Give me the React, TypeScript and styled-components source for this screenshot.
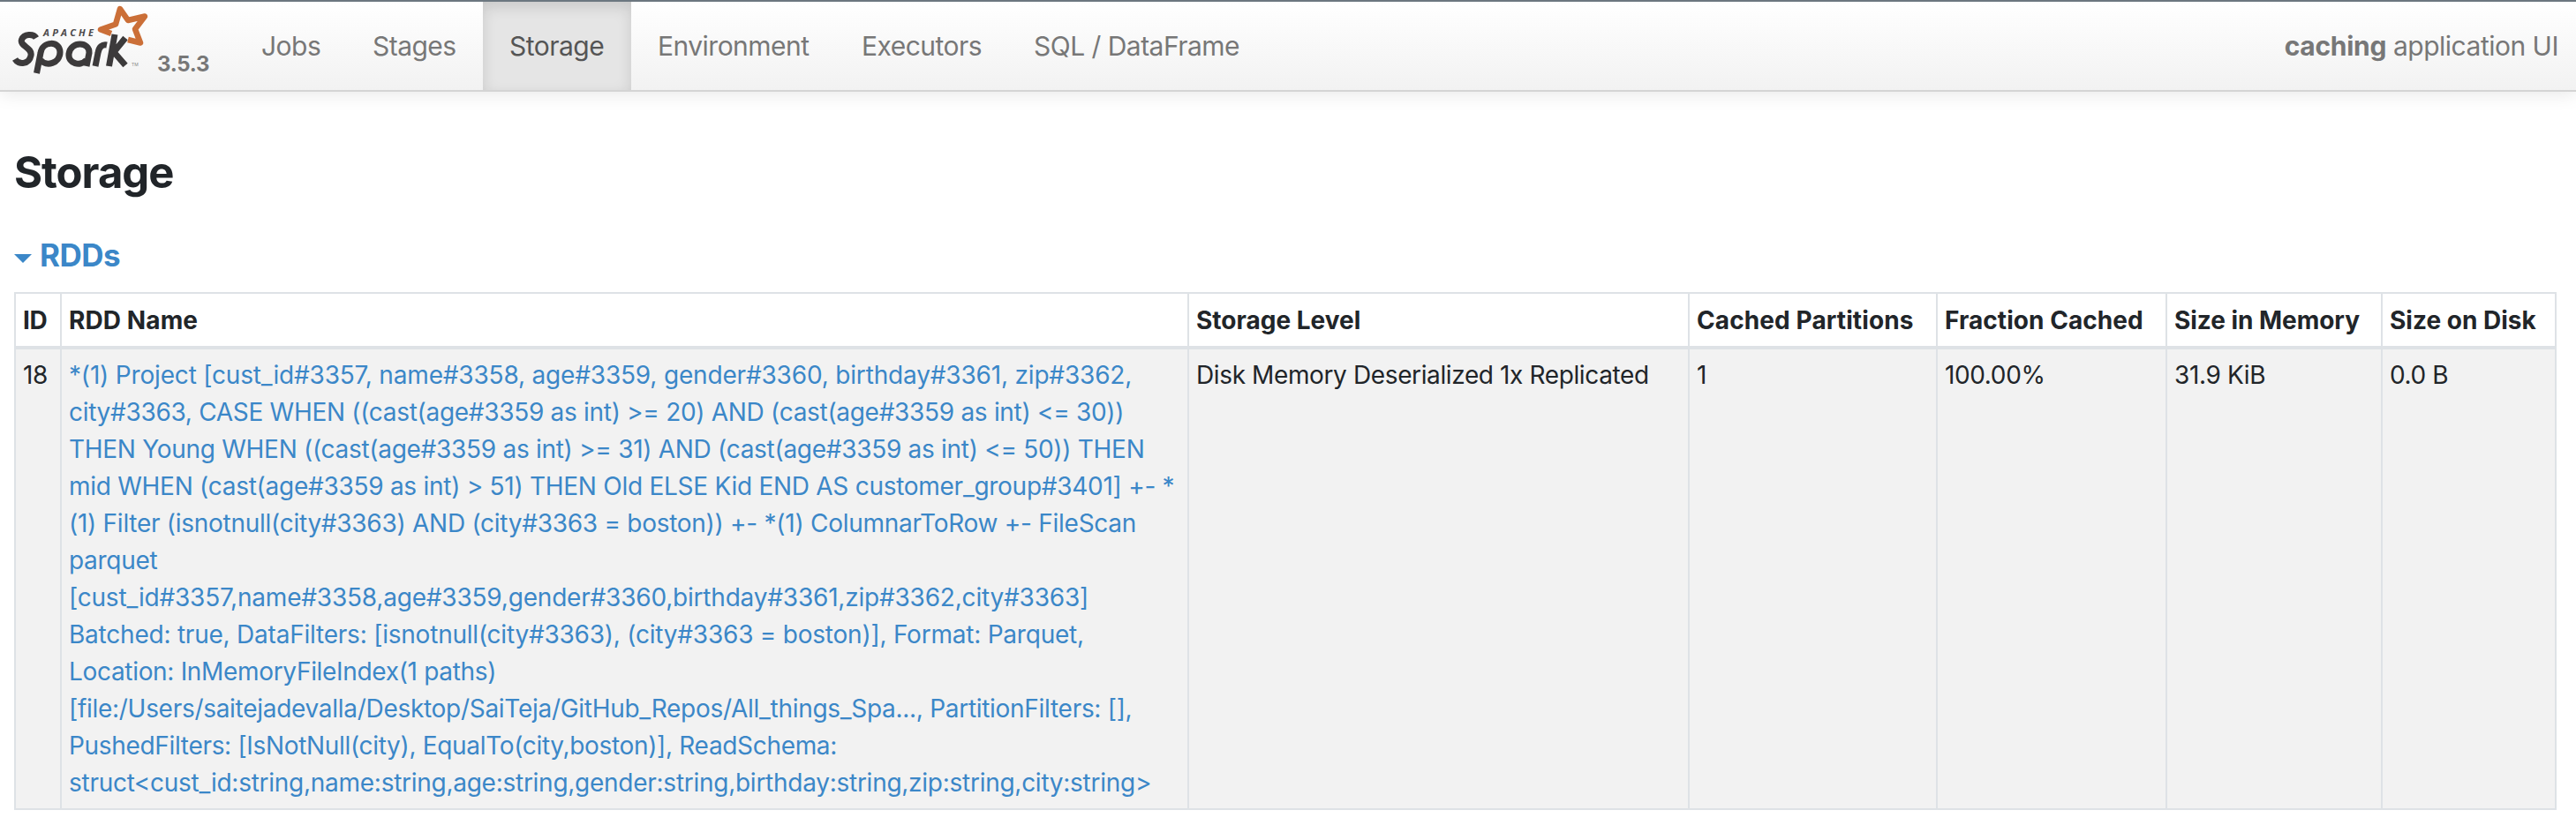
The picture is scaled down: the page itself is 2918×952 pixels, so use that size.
import React from "react";
import styled, { createGlobalStyle } from "styled-components";

const GlobalStyle = createGlobalStyle`
  * { box-sizing: border-box; }
  body { margin: 0; background: #fff; color: #212529; font: 400 28px/42px Inter, sans-serif; }
`;

const Navbar = styled.header`
  display: flex;
  height: 104px;
  border-top: 2px solid #6c7780;
  border-bottom: 2px solid #d4d4d4;
  background: linear-gradient(#fff, #f2f2f2);
  box-shadow: 0 2px 20px rgba(0, 0, 0, 0.1);
  color: #777;
`;

const Brand = styled.div`
  display: flex;
  width: 266px;
  padding-left: 14px;
`;

const Logo = styled.svg`
  display: block;
  width: 156px;
  height: 84px;
  margin-top: 2px;
`;

const Version = styled.span`
  margin: 50px 0 0 8px;
  font-size: 24px;
  line-height: 41px;
  font-weight: 700;
  letter-spacing: -0.3px;
`;

const Tabs = styled.nav`
  display: flex;
`;

const Tab = styled.a<{ $width: number; $active?: boolean }>`
  width: ${(p) => p.$width}px;
  height: 100px;
  padding: 29px 0 0 30px;
  font-size: 30px;
  line-height: 42px;
  white-space: nowrap;
  letter-spacing: -0.52px;
  color: ${(p) => (p.$active ? "#555" : "#777")};
  background: ${(p) => (p.$active ? "#e5e5e5" : "transparent")};
  box-shadow: ${(p) => (p.$active ? "inset 0 6px 16px rgba(0, 0, 0, 0.125)" : "none")};
`;

const AppName = styled.div`
  margin: 29px 20px 0 auto;
  font-size: 30px;
  letter-spacing: -0.5px;
`;

const AppId = styled.strong`
  letter-spacing: -0.3px;
`;

const Main = styled.main`
  padding: 63px 22px 0 16px;
`;

const Title = styled.h3`
  margin: 0;
  font-size: 49px;
  line-height: 58px;
  font-weight: 700;
  letter-spacing: -1px;
`;

const SectionToggle = styled.h4`
  display: flex;
  align-items: center;
  gap: 9px;
  margin: 43px 0 21px;
  font-size: 35px;
  line-height: 42px;
  font-weight: 700;
  letter-spacing: -0.5px;
  color: #3b87c8;
`;

const Caret = styled.i`
  margin-top: 7px;
  border: 10px solid transparent;
  border-top-color: #3b87c8;
  border-bottom: 0;
`;

const Table = styled.table`
  width: 2880px;
  table-layout: fixed;
  border-collapse: separate;
  border-spacing: 0;
  border-right: 2px solid #dee2e6;
  border-bottom: 2px solid #dee2e6;
`;

const Col = styled.col<{ $width: number }>`
  width: ${(p) => p.$width}px;
`;

const HeadCell = styled.th<{ $spacing: number }>`
  height: 65px;
  padding: 8px 0 8px 8px;
  border: solid #dee2e6;
  border-width: 2px 0 4px 2px;
  text-align: left;
  white-space: nowrap;
  font-weight: 700;
  letter-spacing: ${(p) => p.$spacing}px;
`;

const Cell = styled.td`
  padding: 8px 0 8px 8px;
  border-left: 2px solid #dee2e6;
  background: #f2f2f2;
  vertical-align: top;
  white-space: nowrap;
  letter-spacing: -0.38px;
`;

const PlanLine = styled.a<{ $spacing: number }>`
  display: block;
  width: max-content;
  color: #3b87c8;
  letter-spacing: ${(p) => p.$spacing}px;
`;

const tabs = [
  { label: "Jobs", width: 126 },
  { label: "Stages", width: 155 },
  { label: "Storage", width: 168, active: true },
  { label: "Environment", width: 231 },
  { label: "Executors", width: 195 },
  { label: "SQL / DataFrame", width: 293 },
];

const columns = [
  { label: "ID", width: 52, value: "18", spacing: -0.3 },
  { label: "RDD Name", width: 1277, value: "", spacing: 0.1 },
  { label: "Storage Level", width: 567, value: "Disk Memory Deserialized 1x Replicated", spacing: 0 },
  { label: "Cached Partitions", width: 281, value: "1", spacing: 0.1 },
  { label: "Fraction Cached", width: 260, value: "100.00%", spacing: 0.05 },
  { label: "Size in Memory", width: 244, value: "31.9 KiB", spacing: -0.04 },
  { label: "Size on Disk", width: 197, value: "0.0 B", spacing: 0 },
];

const plan: [string, number][] = [
  ["*(1) Project [cust_id#3357, name#3358, age#3359, gender#3360, birthday#3361, zip#3362,", -0.175],
  ["city#3363, CASE WHEN ((cast(age#3359 as int) >= 20) AND (cast(age#3359 as int) <= 30))", -0.3],
  ["THEN Young WHEN ((cast(age#3359 as int) >= 31) AND (cast(age#3359 as int) <= 50)) THEN", -0.29],
  ["mid WHEN (cast(age#3359 as int) > 51) THEN Old ELSE Kid END AS customer_group#3401] +- *", -0.27],
  ["(1) Filter (isnotnull(city#3363) AND (city#3363 = boston)) +- *(1) ColumnarToRow +- FileScan", -0.27],
  ["parquet", -0.3],
  ["[cust_id#3357,name#3358,age#3359,gender#3360,birthday#3361,zip#3362,city#3363]", -0.2],
  ["Batched: true, DataFilters: [isnotnull(city#3363), (city#3363 = boston)], Format: Parquet,", -0.22],
  ["Location: InMemoryFileIndex(1 paths)", -0.32],
  ["[file:/Users/saitejadevalla/Desktop/SaiTeja/GitHub_Repos/All_things_Spa..., PartitionFilters: [],", -0.29],
  ["PushedFilters: [IsNotNull(city), EqualTo(city,boston)], ReadSchema:", -0.32],
  ["struct<cust_id:string,name:string,age:string,gender:string,birthday:string,zip:string,city:string>", -0.265],
];

const SparkLogo = () => (
  <Logo viewBox="14 4 156 84" fill="none">
    <path
      d="M126 38 L114 33.500 L131 27.500 L136 10 L145 23 L164 18.500 L153 33 L159 48.500 L145 45"
      stroke="#cb6f38"
      strokeWidth="6.500"
      strokeLinejoin="round"
    />
    <g stroke="#3c3a3b" strokeWidth="7">
      <path d="M41 43 C38 38 27 38 24.500 45 C22 52 37 54 35 63 C33 73 21 74 17 67" />
      <path d="M41.500 83 L46 60 C48 46 68 46 68 59 C68 72 52 76 46 68" />
      <path d="M98 75 L101 60 C102 47 80 46 78 61 C77 72 91 76 98 68" />
      <path d="M108 75 L111 60 C112 53 116 50 121 51" />
      <path d="M123.500 75 L130 39 M142 43 L129 59 L142 74" />
    </g>
    <text x="49" y="41" textLength="57" fill="#4a4849" fontFamily="Open Sans, sans-serif" fontSize="11" fontStyle="italic" fontWeight="700">
      APACHE
    </text>
    <text x="149" y="75" fill="#888" fontFamily="Inter, sans-serif" fontSize="5">
      TM
    </text>
  </Logo>
);

export default function App() {
  return (
    <>
      <GlobalStyle />
      <Navbar>
        <Brand>
          <SparkLogo />
          <Version>3.5.3</Version>
        </Brand>
        <Tabs>
          {tabs.map((t) => (
            <Tab key={t.label} $width={t.width} $active={t.active}>
              {t.label}
            </Tab>
          ))}
        </Tabs>
        <AppName>
          <AppId>caching</AppId> application UI
        </AppName>
      </Navbar>
      <Main>
        <Title>Storage</Title>
        <SectionToggle>
          <Caret />
          RDDs
        </SectionToggle>
        <Table>
          <colgroup>
            {columns.map((c) => (
              <Col key={c.label} $width={c.width} />
            ))}
          </colgroup>
          <thead>
            <tr>
              {columns.map((c) => (
                <HeadCell key={c.label} $spacing={c.spacing}>
                  {c.label}
                </HeadCell>
              ))}
            </tr>
          </thead>
          <tbody>
            <tr>
              {columns.map((c) => (
                <Cell key={c.label}>
                  {c.value ||
                    plan.map(([text, spacing]) => (
                      <PlanLine key={text} $spacing={spacing}>
                        {text}
                      </PlanLine>
                    ))}
                </Cell>
              ))}
            </tr>
          </tbody>
        </Table>
      </Main>
    </>
  );
}
